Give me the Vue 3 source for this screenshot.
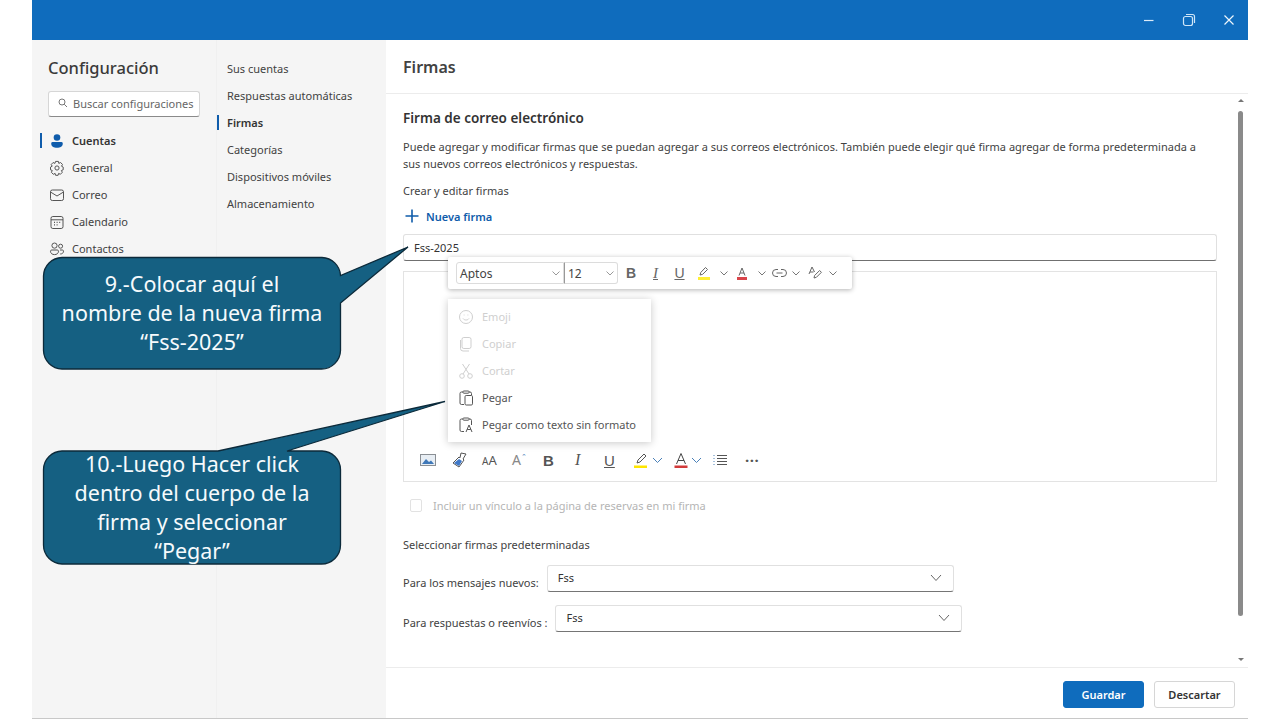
<script setup>
const navItems = [
  { label: 'Cuentas', icon: 'user', active: true },
  { label: 'General', icon: 'gear' },
  { label: 'Correo', icon: 'mail' },
  { label: 'Calendario', icon: 'cal' },
  { label: 'Contactos', icon: 'people' },
]
const subItems = ['Sus cuentas', 'Respuestas automáticas', 'Firmas', 'Categorías', 'Dispositivos móviles', 'Almacenamiento']
const menuItems = [
  { label: 'Emoji', icon: 'emoji', off: true },
  { label: 'Copiar', icon: 'copy', off: true },
  { label: 'Cortar', icon: 'cut', off: true },
  { label: 'Pegar', icon: 'paste' },
  { label: 'Pegar como texto sin formato', icon: 'pastetext' },
]
</script>

<template>
  <div class="page">
    <div class="window">
      <header class="titlebar">
        <svg class="tb" width="12" height="12" viewBox="0 0 12 12"><path d="M1 6.500h9.500" stroke="#dcebf8" stroke-width="1.200" fill="none"/></svg>
        <svg class="tb" width="14" height="14" viewBox="0 0 14 14" fill="none" stroke="#cfe6f8" stroke-width="1.200"><rect x="1.500" y="3.500" width="9" height="9" rx="2"/><path d="M4 1.500h6.500a2 2 0 0 1 2 2V10"/></svg>
        <svg class="tb" width="12" height="12" viewBox="0 0 12 12"><path d="M1.500 1.500l9 9M10.500 1.500l-9 9" stroke="#eef6fc" stroke-width="1.200" fill="none"/></svg>
      </header>
      <div class="body">
        <aside class="nav">
          <h1 class="nav-title">Configuración</h1>
          <div class="search">
            <svg width="10" height="10" viewBox="0 0 10 10" fill="none" stroke="#777" stroke-width="1"><circle cx="4" cy="4" r="3"/><path d="M6.200 6.200L9 9"/></svg>
            <span>Buscar configuraciones</span>
          </div>
          <ul class="nav-list">
            <li v-for="n in navItems" :key="n.label" :class="['nav-item', { active: n.active }]">
              <svg class="nav-icon" width="16" height="16" viewBox="0 0 16 16" fill="none" stroke="#555" stroke-width="1">
                <template v-if="n.icon === 'user'">
                  <circle cx="8" cy="4.500" r="3.300" fill="#0f5cab" stroke="none"/>
                  <path d="M2.200 10.500a1.500 1.500 0 0 1 1.500-1.400h8.600a1.500 1.500 0 0 1 1.500 1.400c0 3-2.600 4.300-5.800 4.300s-5.800-1.300-5.800-4.300z" fill="#0f5cab" stroke="none"/>
                </template>
                <template v-else-if="n.icon === 'gear'">
                  <path d="M6.600 1.400h2.800l.4 2 1.800-.9 1.900 2-1 1.700 1.700.9v2.700l-1.800.7.9 1.800-1.900 2-1.800-.9-.5 1.900H6.600l-.5-1.900-1.800.9-1.900-2 .9-1.800-1.800-.7V7.100l1.700-.9-1-1.700 1.900-2 1.800.9z"/>
                  <circle cx="8" cy="8" r="2.100"/>
                </template>
                <template v-else-if="n.icon === 'mail'">
                  <rect x="1.500" y="3" width="13" height="10.500" rx="1.800"/>
                  <path d="M1.800 5.200L8 9l6.200-3.800"/>
                </template>
                <template v-else-if="n.icon === 'cal'">
                  <rect x="2" y="2.500" width="12" height="12" rx="1.800"/>
                  <path d="M2 5.800h12"/>
                  <path d="M5 8.300h1M7.600 8.300h1M10.200 8.300h1M5 10.800h1M7.600 10.800h1" stroke-width="1.200"/>
                </template>
                <template v-else>
                  <circle cx="5.500" cy="4.600" r="2.600"/>
                  <circle cx="11.600" cy="5.200" r="2"/>
                  <path d="M1.500 10.200c0-.8.6-1.200 1.200-1.200h5.600c.7 0 1.200.5 1.200 1.200 0 2.200-1.800 3.400-4 3.400s-4-1.200-4-3.400zM11 9h2.400c.6 0 1.100.5 1.100 1.100 0 1.900-1.300 2.900-3.300 2.900"/>
                </template>
              </svg>
              <span>{{ n.label }}</span>
            </li>
          </ul>
        </aside>
        <nav class="sub">
          <div v-for="s in subItems" :key="s" :class="['sub-item', { active: s === 'Firmas' }]">{{ s }}</div>
        </nav>
        <main class="main">
          <div class="main-head">Firmas</div>
          <div class="scroll">
            <div class="content">
              <h2 class="sec">Firma de correo electrónico</h2>
              <p class="desc">Puede agregar y modificar firmas que se puedan agregar a sus correos electrónicos. También puede elegir qué firma agregar de forma predeterminada a sus nuevos correos electrónicos y respuestas.</p>
              <div class="label-edit">Crear y editar firmas</div>
              <div class="new-sig">
                <svg width="16" height="16" viewBox="0 0 16 16"><path d="M8 1.500v13M1.500 8h13" stroke="#0f5cab" stroke-width="1.600" fill="none"/></svg>
                <span>Nueva firma</span>
              </div>
              <div class="name-input">Fss-2025</div>
              <div class="editor">
                <div class="editor-bar">
                  <svg width="18" height="16" viewBox="0 0 18 16"><rect x="1.500" y="2.500" width="15" height="11" fill="#e8eef4" stroke="#8a8f94"/><path d="M3 12l4-5 3 3 2-1.500 3 3.500z" fill="#3f78b8"/></svg>
                  <svg class="e-brush" width="18" height="18" viewBox="0 0 18 18"><path d="M10 2l5 1-3 5 1 1-5 7-6-4 6-6 1 .8z" fill="#fff" stroke="#555"/><path d="M3 12l5-4 3 2-3 5z" fill="#3f78c8"/></svg>
                  <span class="aa"><small>A</small>A</span>
                  <span class="ag">A<sup>⌃</sup></span>
                  <span class="fb">B</span>
                  <span class="fi">I</span>
                  <span class="fu">U</span>
                  <svg class="e-pen" width="18" height="18" viewBox="0 0 18 18"><path d="M5 12l1-3 6-6 2 2-6 6z" fill="none" stroke="#555"/><rect x="2" y="14.500" width="13" height="2.500" fill="#ffe600"/></svg>
                  <svg class="e-chev" width="11" height="7" viewBox="0 0 11 7"><path d="M1 1l4.500 4.500L10 1" stroke="#4a80b8" fill="none"/></svg>
                  <svg class="e-color" width="16" height="18" viewBox="0 0 16 18"><path d="M3.500 13L8 2.500 12.500 13M5 9.500h6" stroke="#444" fill="none"/><rect x="1.500" y="14.500" width="13" height="2.500" fill="#d23a3a"/></svg>
                  <svg class="e-chev" width="11" height="7" viewBox="0 0 11 7"><path d="M1 1l4.500 4.500L10 1" stroke="#4a80b8" fill="none"/></svg>
                  <svg class="e-list" width="16" height="14" viewBox="0 0 16 14" stroke="#555" fill="none"><path d="M5 2.500h10M5 5.500h10M5 8.500h10M5 11.500h10"/><path d="M1.500 2.500h1M1.500 5.500h1M1.500 8.500h1M1.500 11.500h1" stroke="#4a80b8"/></svg>
                  <span class="more">···</span>
                </div>
              </div>
              <label class="check">
                <span class="box"></span>
                <span>Incluir un vínculo a la página de reservas en mi firma</span>
              </label>
              <div class="label-def">Seleccionar firmas predeterminadas</div>
              <div class="row row-a">
                <span class="row-label">Para los mensajes nuevos:</span>
                <div class="select">
                  <span>Fss</span>
                  <svg width="12" height="8" viewBox="0 0 12 8"><path d="M1 1l5 5.500L11 1" stroke="#666" fill="none"/></svg>
                </div>
              </div>
              <div class="row row-b">
                <span class="row-label">Para respuestas o reenvíos :</span>
                <div class="select">
                  <span>Fss</span>
                  <svg width="12" height="8" viewBox="0 0 12 8"><path d="M1 1l5 5.500L11 1" stroke="#666" fill="none"/></svg>
                </div>
              </div>
            </div>
            <div class="scrollbar">
              <span class="arrow up"></span>
              <span class="thumb"></span>
              <span class="arrow down"></span>
            </div>
          </div>
          <footer class="foot">
            <button class="btn primary">Guardar</button>
            <button class="btn">Descartar</button>
          </footer>
        </main>
      </div>
    </div>

    <div class="float-bar">
      <div class="fsel font"><span>Aptos</span><svg width="8" height="5" viewBox="0 0 8 5"><path d="M.5.500L4 4 7.500.500" stroke="#999" fill="none"/></svg></div>
      <div class="fsel size"><span>12</span><svg width="8" height="5" viewBox="0 0 8 5"><path d="M.5.500L4 4 7.500.500" stroke="#999" fill="none"/></svg></div>
      <span class="tool fb">B</span>
      <span class="tool fi">I</span>
      <span class="tool fu">U</span>
      <svg class="ti" width="14" height="16" viewBox="0 0 14 16"><path d="M3 10l.8-2.600L8.500 2.500l2 2-4.800 4.800z" fill="none" stroke="#666"/><rect x="1" y="12" width="12" height="3" fill="#ffee33"/></svg>
      <svg class="tc c1" width="8" height="5" viewBox="0 0 8 5"><path d="M.5.500L4 4 7.500.500" stroke="#777" fill="none"/></svg>
      <svg class="ti2" width="12" height="16" viewBox="0 0 12 16"><path d="M3 10.500L6 3l3 7.500M4 8h4" stroke="#666" fill="none"/><rect x="1" y="12" width="10" height="3" fill="#d9444a"/></svg>
      <svg class="tc c2" width="8" height="5" viewBox="0 0 8 5"><path d="M.5.500L4 4 7.500.500" stroke="#777" fill="none"/></svg>
      <svg class="ti3" width="15" height="10" viewBox="0 0 15 10" fill="none" stroke="#666"><path d="M6 1.500H4a3.300 3.300 0 0 0 0 7h2M9 1.500h2a3.300 3.300 0 0 1 0 7H9M4.500 5h6"/></svg>
      <svg class="tc c3" width="8" height="5" viewBox="0 0 8 5"><path d="M.5.500L4 4 7.500.500" stroke="#777" fill="none"/></svg>
      <svg class="ti4" width="15" height="14" viewBox="0 0 15 14" fill="none" stroke="#666"><path d="M1 8l3-7 2.500 5"/><path d="M2 6h3.500"/><path d="M6 12l.6-2.500 5-5 1.800 1.800-5 5z"/></svg>
      <svg class="tc c4" width="8" height="5" viewBox="0 0 8 5"><path d="M.5.500L4 4 7.500.500" stroke="#777" fill="none"/></svg>
    </div>

    <div class="menu">
      <div v-for="m in menuItems" :key="m.label" :class="['menu-item', { off: m.off }]">
        <svg width="16" height="16" viewBox="0 0 16 16" fill="none" stroke="currentColor">
          <template v-if="m.icon === 'emoji'">
            <circle cx="8" cy="8" r="6.500"/>
            <path d="M5 9.500c1.500 2 4.500 2 6 0"/>
            <path d="M5.800 6h.5M9.700 6h.5" stroke-width="1.300"/>
          </template>
          <template v-else-if="m.icon === 'copy'">
            <rect x="4" y="1.500" width="9" height="11" rx="1.800"/>
            <path d="M2.500 4v8.500a2.500 2.500 0 0 0 2.500 2.500h6"/>
          </template>
          <template v-else-if="m.icon === 'cut'">
            <circle cx="4" cy="13" r="2.300"/>
            <circle cx="12" cy="13" r="2.300"/>
            <path d="M5 11L11.500 1M11 11L4.500 1"/>
          </template>
          <template v-else-if="m.icon === 'paste'">
            <path d="M6 14.500H3.500a1.500 1.500 0 0 1-1.500-1.500V3.500A1.500 1.500 0 0 1 3.500 2H5M11 2h1a1.500 1.500 0 0 1 1.500 1.500V5"/>
            <rect x="5" y="1" width="6" height="2.200" rx=".8"/>
            <rect x="7" y="5.500" width="7.500" height="9.500" rx="1.200"/>
          </template>
          <template v-else>
            <path d="M6 14.500H3.500A1.500 1.500 0 0 1 2 13V3.500A1.500 1.500 0 0 1 3.500 2H5M11 2h1a1.500 1.500 0 0 1 1.500 1.500V8"/>
            <rect x="5" y="1" width="6" height="2.200" rx=".8"/>
            <path d="M8 15l3-7 3 7M9.200 12.500h3.600"/>
          </template>
        </svg>
        <span>{{ m.label }}</span>
      </div>
    </div>

    <svg class="callouts" width="1280" height="720" viewBox="0 0 1280 720">
      <path class="shape" d="M62 257.500H322a19 19 0 0 1 18.500 18L408 247 340.500 303V350.500a19 19 0 0 1-19 18.500H62a19 19 0 0 1-18.500-18.500V276A19 19 0 0 1 62 257.500z"/>
      <path class="shape" d="M62 451H218L445 401.500 287 451H322a19 19 0 0 1 18.500 18.500V545a19 19 0 0 1-19 19H62a19 19 0 0 1-18.500-19V469.500A19 19 0 0 1 62 451z"/>
    </svg>
    <div class="note note-a">
      <div>9.-Colocar aquí el</div>
      <div>nombre de la nueva firma</div>
      <div>“Fss-2025”</div>
    </div>
    <div class="note note-b">
      <div>10.-Luego Hacer click</div>
      <div>dentro del cuerpo de la</div>
      <div>firma y seleccionar</div>
      <div>“Pegar”</div>
    </div>
  </div>
</template>

<style scoped>
.page {
  position: relative;
  width: 1280px;
  height: 720px;
  overflow: hidden;
  background: #fff;
  font-family: "Noto Sans", "Open Sans", sans-serif;
  font-size: 11px;
  color: #424242;
}
.window {
  margin-left: 32px;
  width: 1216px;
  height: 719px;
  display: flex;
  flex-direction: column;
  border-bottom: 1px solid #c8c8c8;
  box-sizing: border-box;
}
.titlebar {
  height: 40px;
  flex: none;
  background: #0f6cbd;
  display: flex;
  align-items: center;
  justify-content: flex-end;
  gap: 27px;
  padding-right: 13px;
  box-sizing: border-box;
}
.body { flex: 1; display: flex; min-height: 0; }
.nav {
  width: 184px;
  flex: none;
  background: #f5f5f5;
  padding: 16px 16px 0;
  box-sizing: border-box;
}
.nav-title {
  margin: 0;
  font-size: 16.500px;
  line-height: 23px;
  font-weight: 500;
  color: #3a3a3a;
}
.search {
  margin-top: 12px;
  width: 152px;
  height: 26px;
  background: #fff;
  border: 1px solid #d6d6d6;
  border-bottom-color: #8a8a8a;
  border-radius: 3px;
  box-sizing: border-box;
  display: flex;
  align-items: center;
  gap: 5px;
  padding: 0 0 2px 9px;
  white-space: nowrap;
  color: #666;
}
.nav-list { list-style: none; margin: 10px 0 0; padding: 0; }
.nav-item {
  position: relative;
  height: 27px;
  display: flex;
  align-items: center;
  gap: 7px;
  padding-left: 1px;
  white-space: nowrap;
}
.nav-item.active { font-weight: 600; color: #333; }
.nav-item.active::before {
  content: "";
  position: absolute;
  left: -8px;
  top: 6px;
  width: 2px;
  height: 15px;
  background: #0f5cab;
}
.sub {
  width: 170px;
  flex: none;
  background: #f5f5f5;
  border-left: 1px solid #f0f0f0;
  padding-top: 15px;
  box-sizing: border-box;
}
.sub-item {
  position: relative;
  height: 27px;
  line-height: 27px;
  padding-left: 10px;
  white-space: nowrap;
}
.sub-item.active { font-weight: 600; color: #333; }
.sub-item.active::before {
  content: "";
  position: absolute;
  left: 0;
  top: 6px;
  width: 2px;
  height: 15px;
  background: #0f5cab;
}
.main { flex: 1; min-width: 0; display: flex; flex-direction: column; background: #fff; }
.main-head {
  height: 54px;
  flex: none;
  box-sizing: border-box;
  border-bottom: 1px solid #ececec;
  padding: 15px 0 0 17px;
  font-size: 16px;
  line-height: 24px;
  font-weight: 600;
  color: #424242;
}
.scroll { flex: 1; min-height: 0; display: flex; }
.content { width: 831px; flex: none; padding: 13px 0 0 17px; box-sizing: border-box; }
.sec { margin: 0; font-size: 13.500px; line-height: 22px; font-weight: 600; color: #333; }
.desc { margin: 9px 0 0; line-height: 17px; width: 810px; }
.label-edit { margin-top: 10px; line-height: 17px; }
.new-sig {
  margin-top: 7px;
  height: 20px;
  display: flex;
  align-items: center;
  gap: 6px;
  font-weight: 600;
  color: #0f5cab;
  padding-left: 1px;
}
.name-input {
  margin-top: 8px;
  width: 814px;
  height: 27px;
  line-height: 25px;
  box-sizing: border-box;
  border: 1px solid #e0e0e0;
  border-bottom-color: #707070;
  border-radius: 3px;
  padding-left: 10px;
  color: #333;
}
.editor {
  margin-top: 10px;
  width: 814px;
  height: 211px;
  box-sizing: border-box;
  border: 1px solid #e3e3e3;
  display: flex;
  align-items: flex-end;
}
.editor-bar {
  height: 22px;
  margin-bottom: 10px;
  padding-left: 15px;
  display: flex;
  align-items: center;
  color: #555;
}
.e-brush { margin-left: 14px; }
.aa { margin-left: 13px; width: 20px; font-size: 13px; white-space: nowrap; }
.aa small { font-size: 10px; }
.ag { margin-left: 10px; width: 20px; font-size: 14px; color: #888; line-height: 1; white-space: nowrap; }
.ag sup { font-size: 7px; color: #4a80b8; }
.fb { font-family: "Liberation Sans", sans-serif; font-weight: 700; font-size: 15px; }
.fi { font-family: "Liberation Serif", serif; font-style: italic; font-size: 16px; }
.fu { font-family: "Liberation Sans", sans-serif; font-size: 15px; text-decoration: underline; }
.editor-bar .fb { margin-left: 11px; width: 32px; }
.editor-bar .fi { width: 29px; }
.editor-bar .fu { width: 28px; }
.e-chev { margin-left: 2px; flex: none; }
.e-color { margin-left: 10px; }
.e-list { margin-left: 10px; }
.more { margin-left: 17px; font-weight: 700; font-size: 15px; letter-spacing: 0.5px; }
.check {
  margin-top: 14px;
  height: 18px;
  display: flex;
  align-items: center;
  gap: 11px;
  padding-left: 7px;
  color: #b5b5b5;
}
.box {
  width: 12px;
  height: 13px;
  border: 1px solid #e2e2e2;
  border-radius: 2px;
  box-sizing: border-box;
}
.label-def { margin-top: 22px; line-height: 17px; }
.row { display: flex; align-items: flex-end; gap: 8px; white-space: nowrap; }
.row-a { margin-top: 12px; }
.row-b { margin-top: 13px; }
.row-label { line-height: 17px; padding-bottom: 1px; }
.select {
  width: 407px;
  height: 27px;
  box-sizing: border-box;
  border: 1px solid #e0e0e0;
  border-bottom-color: #757575;
  border-radius: 3px;
  padding: 0 11px 2px 10px;
  display: flex;
  align-items: center;
  justify-content: space-between;
  color: #333;
  background: #fff;
}
.scrollbar { flex: 1; position: relative; }
.thumb {
  position: absolute;
  left: 21px;
  top: 17px;
  width: 5px;
  height: 505px;
  border-radius: 3px;
  background: #8a8a8a;
}
.arrow {
  position: absolute;
  left: 21px;
  width: 0;
  height: 0;
  border-left: 3px solid transparent;
  border-right: 3px solid transparent;
}
.arrow.up { top: 5px; border-bottom: 3px solid #777; }
.arrow.down { bottom: 6px; border-top: 3px solid #777; }
.foot {
  height: 51px;
  flex: none;
  box-sizing: border-box;
  border-top: 1px solid #ececec;
  display: flex;
  justify-content: flex-end;
  align-items: flex-start;
  gap: 10px;
  padding: 13px 13px 0 0;
}
.btn {
  height: 27px;
  width: 81px;
  font: 600 11px "Noto Sans", sans-serif;
  background: #fff;
  color: #333;
  border: 1px solid #d6d6d6;
  border-radius: 3px;
  padding: 0;
}
.btn.primary { background: #0f6cbd; border-color: #0f6cbd; color: #fff; }

.float-bar {
  position: absolute;
  left: 448px;
  top: 257px;
  width: 404px;
  height: 32px;
  background: #fff;
  border-radius: 2px;
  box-shadow: 0 1px 5px rgba(0, 0, 0, 0.3);
  display: flex;
  align-items: center;
  padding-left: 8px;
  box-sizing: border-box;
}
.fsel {
  height: 22px;
  box-sizing: border-box;
  border: 1px solid #dcdcdc;
  display: flex;
  align-items: center;
  justify-content: space-between;
  padding: 0 3px;
  font-size: 12px;
  color: #444;
}
.font { width: 108px; border-radius: 3px 0 0 3px; }
.size { width: 54px; border-radius: 0 3px 3px 0; border-left: 1px solid #999; }
.tool { color: #666; }
.tool.fb { margin-left: 8px; width: 19px; font-size: 14px; }
.tool.fi { margin-left: 2px; width: 17px; font-size: 15px; text-decoration: underline; text-align: center; }
.tool.fu { margin-left: 7px; width: 17px; font-size: 14px; text-align: center; }
.ti { margin-left: 9px; }
.c1 { margin-left: 9px; }
.ti2 { margin-left: 8px; }
.c2 { margin-left: 10px; }
.ti3 { margin-left: 6px; }
.c3 { margin-left: 5px; }
.ti4 { margin-left: 8px; }
.c4 { margin-left: 6px; }

.menu {
  position: absolute;
  left: 448px;
  top: 299px;
  width: 203px;
  height: 143px;
  padding-top: 4px;
  box-sizing: border-box;
  background: #fff;
  box-shadow: 0 1px 8px rgba(0, 0, 0, 0.22);
}
.menu-item {
  height: 27px;
  display: flex;
  align-items: center;
  gap: 8px;
  padding-left: 10px;
  color: #555;
  white-space: nowrap;
}
.menu-item.off { color: #cfcfcf; }
.callouts { position: absolute; left: 0; top: 0; pointer-events: none; }
.shape { fill: #156082; stroke: #0c2a3a; stroke-width: 1.300; }
.note {
  position: absolute;
  left: 43px;
  width: 298px;
  text-align: center;
  color: #f6fafc;
  font-family: "Noto Sans", sans-serif;
  font-size: 21.500px;
  line-height: 29px;
  white-space: nowrap;
}
.note-a { top: 269px; }
.note-b { top: 449px; }
</style>
